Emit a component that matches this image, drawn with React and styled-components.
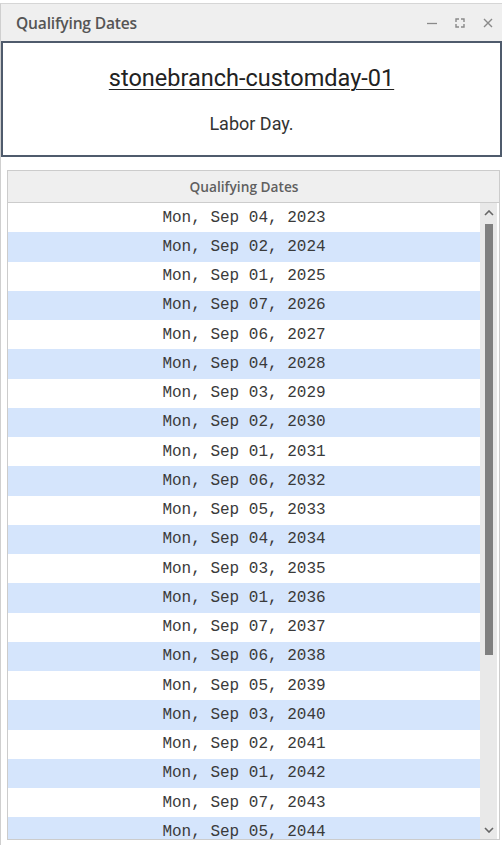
import React from "react";
import styled, { createGlobalStyle } from "styled-components";

const GlobalStyle = createGlobalStyle`
  html, body {
    margin: 0;
    padding: 0;
    background: #ffffff;
  }
  body {
    font-family: "Open Sans", "Liberation Sans", sans-serif;
  }
`;

const Window = styled.div`
  width: 502px;
  height: 842px;
  margin-top: 3px;
  box-sizing: border-box;
  border-top: 1px solid #d6d6d6;
  border-left: 1px solid #cfcfcf;
  display: flex;
  flex-direction: column;
`;

const TitleBar = styled.div`
  height: 37px;
  background: #efefef;
  display: flex;
  align-items: center;
  padding: 0 7px 0 15px;
`;

const Title = styled.div`
  flex: 1;
  font-size: 15.6px;
  font-weight: 600;
  color: #555555;
  letter-spacing: -0.2px;
`;

const Controls = styled.div`
  display: flex;
  align-items: center;
  gap: 14px;
`;

const ControlButton = styled.span`
  width: 14px;
  height: 14px;
  display: flex;
  align-items: center;
  justify-content: center;
`;

const Card = styled.div`
  height: 116px;
  box-sizing: border-box;
  border: 2px solid #4f5b6c;
  background: #ffffff;
  display: flex;
  flex-direction: column;
  align-items: center;
  padding-top: 21px;
  font-family: Roboto, "Liberation Sans", sans-serif;
  color: #222222;
`;

const CardTitle = styled.div`
  font-size: 23.5px;
  line-height: 28px;
  text-decoration: underline;
  text-underline-offset: 3px;
  text-decoration-thickness: 1px;
`;

const CardText = styled.div`
  margin-top: 21px;
  font-size: 18px;
  line-height: 21px;
  color: #333333;
`;

const Panel = styled.div`
  margin: 13px 2px 5px 6px;
  flex: 1;
  border: 1px solid #cccccc;
  display: flex;
  flex-direction: column;
  min-height: 0;
`;

const PanelHeader = styled.div`
  height: 31px;
  background: #efefef;
  border-bottom: 1px solid #cccccc;
  display: flex;
  align-items: center;
  justify-content: center;
  padding-right: 19px;
  font-size: 13.7px;
  font-weight: 600;
  color: #5f5f5f;
`;

const PanelBody = styled.div`
  flex: 1;
  display: flex;
  min-height: 0;
  overflow: hidden;
`;

const List = styled.div`
  flex: 1;
  overflow: hidden;
`;

const Row = styled.div`
  height: 29.25px;
  display: flex;
  align-items: center;
  justify-content: center;
  background: ${(p) => (p.$alt ? "#d5e5fc" : "#ffffff")};
  font-family: "Liberation Mono", "Courier New", monospace;
  font-size: 16px;
  color: #3a3a3a;
  white-space: pre;
`;

const ScrollTrack = styled.div`
  width: 17px;
  background: #e9e9e9;
  display: flex;
  flex-direction: column;
  align-items: center;
  margin-right: 2px;
`;

const ArrowBox = styled.div`
  height: 19px;
  display: flex;
  align-items: center;
  justify-content: center;
`;

const Thumb = styled.div`
  width: 8px;
  height: 431px;
  margin-top: 2px;
  background: #808080;
`;

const Spacer = styled.div`
  flex: 1;
`;

const dates = [
  "Mon, Sep 04, 2023",
  "Mon, Sep 02, 2024",
  "Mon, Sep 01, 2025",
  "Mon, Sep 07, 2026",
  "Mon, Sep 06, 2027",
  "Mon, Sep 04, 2028",
  "Mon, Sep 03, 2029",
  "Mon, Sep 02, 2030",
  "Mon, Sep 01, 2031",
  "Mon, Sep 06, 2032",
  "Mon, Sep 05, 2033",
  "Mon, Sep 04, 2034",
  "Mon, Sep 03, 2035",
  "Mon, Sep 01, 2036",
  "Mon, Sep 07, 2037",
  "Mon, Sep 06, 2038",
  "Mon, Sep 05, 2039",
  "Mon, Sep 03, 2040",
  "Mon, Sep 02, 2041",
  "Mon, Sep 01, 2042",
  "Mon, Sep 07, 2043",
  "Mon, Sep 05, 2044",
];

const App = () => {
  return (
    <>
      <GlobalStyle />
      <Window>
        <TitleBar>
          <Title>Qualifying Dates</Title>
          <Controls>
            <ControlButton>
              <svg width="12" height="12" viewBox="0 0 12 12">
                <line x1="1" y1="6.5" x2="11" y2="6.5" stroke="#8a8a8a" strokeWidth="1.3" />
              </svg>
            </ControlButton>
            <ControlButton>
              <svg width="10" height="10" viewBox="0 0 10 10" fill="none" stroke="#8a8a8a" strokeWidth="1.4">
                <path d="M1 4V1h3M6 1h3v3M9 6v3H6M4 9H1V6" />
              </svg>
            </ControlButton>
            <ControlButton>
              <svg width="10" height="10" viewBox="0 0 10 10" stroke="#8a8a8a" strokeWidth="1.4">
                <path d="M1 1l8 8M9 1l-8 8" />
              </svg>
            </ControlButton>
          </Controls>
        </TitleBar>
        <Card>
          <CardTitle>stonebranch-customday-01</CardTitle>
          <CardText>Labor Day.</CardText>
        </Card>
        <Panel>
          <PanelHeader>Qualifying Dates</PanelHeader>
          <PanelBody>
            <List>
              {dates.map((d, i) => (
                <Row key={d} $alt={i % 2 === 1}>
                  {d}
                </Row>
              ))}
            </List>
            <ScrollTrack>
              <ArrowBox>
                <svg width="10" height="6" viewBox="0 0 10 6" fill="none" stroke="#666" strokeWidth="1.6">
                  <path d="M1 5l4-4 4 4" />
                </svg>
              </ArrowBox>
              <Thumb />
              <Spacer />
              <ArrowBox>
                <svg width="10" height="6" viewBox="0 0 10 6" fill="none" stroke="#666" strokeWidth="1.6">
                  <path d="M1 1l4 4 4-4" />
                </svg>
              </ArrowBox>
            </ScrollTrack>
          </PanelBody>
        </Panel>
      </Window>
    </>
  );
};

export default App;
